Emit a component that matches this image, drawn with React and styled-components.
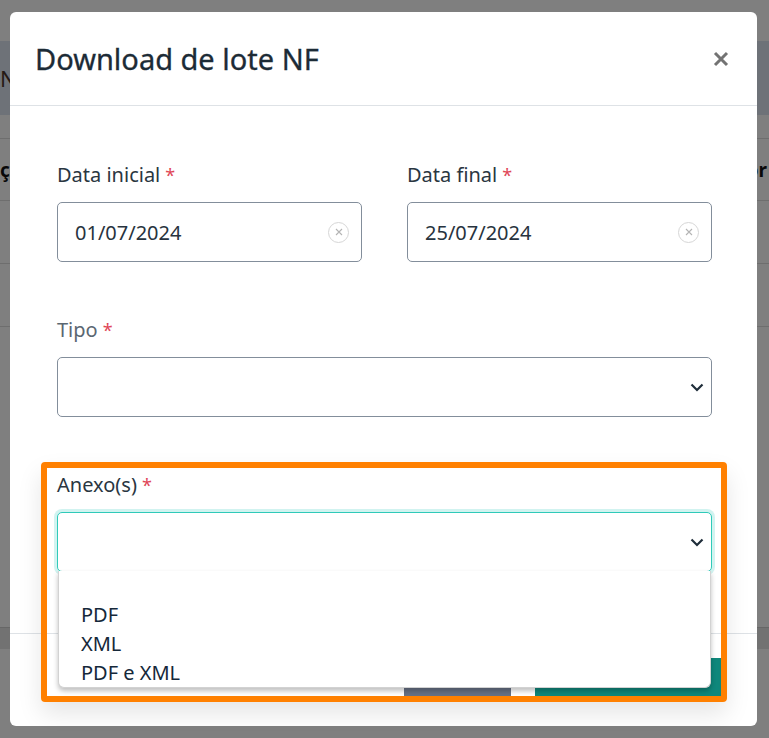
import React from 'react'
import styled, { createGlobalStyle } from 'styled-components'

const GlobalStyle = createGlobalStyle`
  html, body {
    margin: 0;
    padding: 0;
    background: #ffffff;
    font-family: "Noto Sans", "Open Sans", sans-serif;
  }
  * { box-sizing: border-box; }
`

// page behind the backdrop
const Page = styled.div`
  width: 769px;
  height: 738px;
  overflow: hidden;
  background: #ffffff;
`

const TopBar = styled.div`
  height: 41px;
`

const TableHead = styled.div`
  height: 74px;
  background: #dde4f0;
  display: flex;
  align-items: center;
  font-size: 22px;
  color: #4a3328;
`

const TableRow = styled.div`
  height: ${p => p.$h || 62}px;
  border-bottom: 1px solid #dcdcdc;
  display: flex;
  align-items: center;
  justify-content: space-between;
  font-weight: 700;
  font-size: 19px;
  color: #111;
`

const HeadCell = styled.span`
  white-space: nowrap;
  margin-right: ${p => p.$right || 0}px;
`

const BottomBand = styled.div`
  margin-top: 300px;
  height: 22px;
  background: #e4e4e4;
  border-top: 1px solid #cfcfcf;
`

const Backdrop = styled.div`
  position: fixed;
  inset: 0;
  background: rgba(0, 0, 0, 0.5);
`

const Modal = styled.div`
  position: fixed;
  left: 10px;
  top: 12px;
  width: 747px;
  height: 714px;
  background: #ffffff;
  border-radius: 6px;
  display: flex;
  flex-direction: column;
`

const Header = styled.div`
  height: 94px;
  flex: none;
  display: flex;
  align-items: center;
  justify-content: space-between;
  padding: 0 28px 0 25px;
  border-bottom: 1px solid #dee2e6;
`

const Title = styled.h1`
  margin: 0;
  font-size: 29px;
  font-weight: 400;
  color: #1c2b36;
  -webkit-text-stroke: 0.3px #1c2b36;
`

const CloseButton = styled.button`
  border: 0;
  background: none;
  padding: 0;
  width: 16px;
  height: 16px;
  display: flex;
  cursor: pointer;
`

const Body = styled.div`
  flex: 1;
  padding: 55px 45px 0 47px;
  display: flex;
  flex-direction: column;
  gap: 54px;
`

const Row = styled.div`
  display: grid;
  grid-template-columns: 1fr 1fr;
  gap: 45px;
`

const Field = styled.div`
  position: relative;
  display: flex;
  flex-direction: column;
`

const Label = styled.label`
  font-size: 20px;
  line-height: 28px;
  height: 28px;
  color: ${p => (p.$muted ? '#5b6772' : '#2a3641')};
  margin-bottom: 13px;
`

const Required = styled.span`
  color: #e04657;
  margin-left: 5px;
  font-size: 18px;
  line-height: 1;
`

const InputBox = styled.div`
  position: relative;
  height: 60px;
  border: 1px solid ${p => (p.$focused ? '#2fcab9' : '#838e9b')};
  border-radius: 5px;
  display: flex;
  align-items: center;
  justify-content: space-between;
  padding: 0 ${p => (p.$select ? 7 : 12)}px 0 17px;
  background: #ffffff;
  box-shadow: ${p => (p.$focused ? '0 0 0 3px rgba(47, 202, 185, 0.22)' : 'none')};
  font-size: 20px;
  color: #27333e;
`

const ClearIcon = styled.span`
  width: 21px;
  height: 21px;
  border: 1px solid #d6d6d6;
  border-radius: 50%;
  display: flex;
  align-items: center;
  justify-content: center;
`

const Chevron = styled.svg`
  margin-left: auto;
`

const Menu = styled.ul`
  position: absolute;
  left: 0;
  right: 0;
  top: 100%;
  margin: 0;
  padding: 0;
  list-style: none;
  background: #ffffff;
  border: 1px solid #d2d2d2;
  border-top: 0;
  border-radius: 0 0 6px 6px;
  box-shadow: 0 3px 5px rgba(0, 0, 0, 0.25);
  z-index: 3;
`

const Option = styled.li`
  height: 29px;
  line-height: 29px;
  padding-left: 22px;
  font-size: 20px;
  color: #15283a;
`

const Highlight = styled.div`
  position: absolute;
  top: -9px;
  left: -16px;
  right: -15px;
  bottom: -130px;
  border: 6px solid #ff8000;
  border-radius: 4px;
  box-shadow: 0 12px 24px rgba(0, 0, 0, 0.1);
  pointer-events: none;
  z-index: 4;
`

const Footer = styled.div`
  height: 93px;
  flex: none;
  border-top: 1px solid #dee2e6;
  display: flex;
  justify-content: flex-end;
  align-items: flex-start;
  gap: 24px;
  padding: 24px 30px 0 0;
`

const Button = styled.button`
  height: 42px;
  width: ${p => p.$w}px;
  border: 0;
  border-radius: 4px;
  background: ${p => p.$bg};
  color: #ffffff;
  font-family: inherit;
  font-size: 20px;
`

const SelectChevron = () => (
  <Chevron width="14" height="9" viewBox="0 0 14 9">
    <path d="M1.5 1.5 L7 7 L12.5 1.5" fill="none" stroke="#1f2d3a" strokeWidth="2.2" />
  </Chevron>
)

const DateInput = ({ value }) => (
  <InputBox>
    <span>{value}</span>
    <ClearIcon>
      <svg width="8" height="8" viewBox="0 0 8 8">
        <path d="M1 1 L7 7 M7 1 L1 7" stroke="#b4b4b4" strokeWidth="1.1" />
      </svg>
    </ClearIcon>
  </InputBox>
)

export default function App() {
  return (
    <>
      <GlobalStyle />
      <Page>
        <TopBar />
        <TableHead>
          <HeadCell>NF</HeadCell>
        </TableHead>
        <TableRow $h={24} />
        <TableRow>
          <HeadCell>ção</HeadCell>
          <HeadCell $right={2}>Valor</HeadCell>
        </TableRow>
        <TableRow $h={63} />
        <TableRow $h={63} />
        <BottomBand />
      </Page>
      <Backdrop />
      <Modal>
        <Header>
          <Title>Download de lote NF</Title>
          <CloseButton aria-label="Fechar">
            <svg width="16" height="16" viewBox="0 0 16 16">
              <path d="M2 2 L14 14 M14 2 L2 14" stroke="#737373" strokeWidth="3" />
            </svg>
          </CloseButton>
        </Header>
        <Body>
          <Row>
            <Field>
              <Label>Data inicial<Required>*</Required></Label>
              <DateInput value="01/07/2024" />
            </Field>
            <Field>
              <Label>Data final<Required>*</Required></Label>
              <DateInput value="25/07/2024" />
            </Field>
          </Row>
          <Field>
            <Label $muted>Tipo<Required>*</Required></Label>
            <InputBox $select>
              <SelectChevron />
            </InputBox>
          </Field>
          <Field>
            <Label>Anexo(s)<Required>*</Required></Label>
            <InputBox $select $focused>
              <SelectChevron />
              <Menu>
                <Option />
                <Option>PDF</Option>
                <Option>XML</Option>
                <Option>PDF e XML</Option>
              </Menu>
            </InputBox>
            <Highlight />
          </Field>
        </Body>
        <Footer>
          <Button $w={107} $bg="#677185">Cancelar</Button>
          <Button $w={192} $bg="#0f877b">Baixar</Button>
        </Footer>
      </Modal>
    </>
  )
}
